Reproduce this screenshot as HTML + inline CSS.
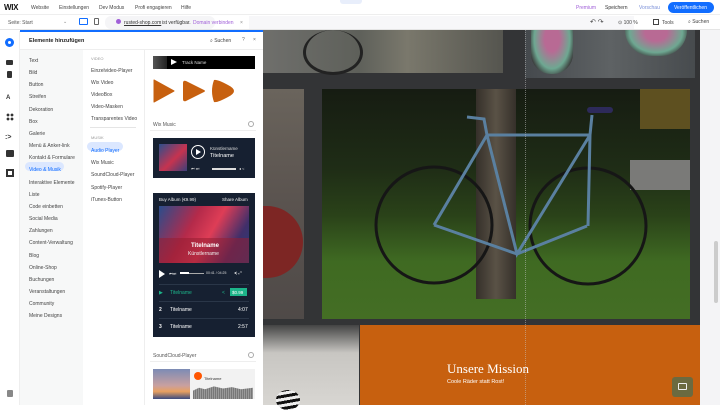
<!DOCTYPE html>
<html><head><meta charset="utf-8"><style>
*{margin:0;padding:0;box-sizing:border-box}
body{width:720px;height:405px;overflow:hidden;font-family:"Liberation Sans",sans-serif;background:#fff;position:relative;font-size:5px;color:#333}
.a{position:absolute}
.t{position:absolute;white-space:nowrap}
</style></head><body>
<!-- top bar -->
<div class="a" style="left:0;top:0;width:720px;height:15px;background:#fff;border-bottom:1px solid #eee"></div>
<div class="t" style="left:4px;top:3px;font-size:8px;font-weight:bold;color:#111;letter-spacing:-0.3px">WIX</div>
<div class="t" style="left:31px;top:5px;color:#444">Website</div>
<div class="t" style="left:59px;top:5px;color:#444">Einstellungen</div>
<div class="t" style="left:99px;top:5px;color:#444">Dev Modus</div>
<div class="t" style="left:135px;top:5px;color:#444">Profi engagieren</div>
<div class="t" style="left:181px;top:5px;color:#444">Hilfe</div>
<div class="a" style="left:340px;top:0;width:22px;height:4px;background:#e8eefb;border-radius:0 0 3px 3px"></div>
<div class="t" style="left:576px;top:5px;color:#a05fd8">Premium</div>
<div class="t" style="left:605px;top:5px;color:#333">Speichern</div>
<div class="t" style="left:639px;top:5px;color:#7a8fd8">Vorschau</div>
<div class="a" style="left:668px;top:2px;width:46px;height:11px;background:#116dff;border-radius:6px"></div>
<div class="t" style="left:674px;top:5px;color:#fff">Veröffentlichen</div>
<!-- second row -->
<div class="a" style="left:0;top:15px;width:720px;height:15px;background:#fff;border-bottom:1px solid #e5e5e5"></div>
<div class="t" style="left:8px;top:20px;color:#555">Seite: Start</div>
<div class="t" style="left:63px;top:19px;color:#888">⌄</div>
<div class="a" style="left:79px;top:18px;width:9px;height:7px;border:1px solid #116dff;border-radius:1px"></div>
<div class="a" style="left:94px;top:18px;width:5px;height:7px;border:1px solid #666;border-radius:1px"></div>
<div class="a" style="left:105px;top:16px;width:110px;height:13px;background:#f5f5f7;border-radius:6px"></div>
<div class="a" style="left:249px;top:16px;width:385px;height:13px;background:#f7f7f9"></div>
<div class="a" style="left:116px;top:19px;width:5px;height:5px;border-radius:50%;background:#a05fd8"></div>
<div class="t" style="left:124px;top:20px;color:#333;text-decoration:underline">rusted-shop.com</div>
<div class="t" style="left:162px;top:20px;color:#333">ist verfügbar.</div>
<div class="t" style="left:193px;top:20px;color:#a05fd8">Domain verbinden</div>
<div class="t" style="left:240px;top:20px;color:#888">×</div>
<div class="t" style="left:590px;top:18px;font-size:7px;color:#444">↶ ↷</div>
<div class="t" style="left:618px;top:20px;color:#444">⊙ 100 %</div>
<div class="a" style="left:653px;top:19px;width:6px;height:6px;border:1px solid #444"></div>
<div class="t" style="left:662px;top:20px;color:#444">Tools</div>
<div class="t" style="left:688px;top:19px;color:#444">⌕ Suchen</div>
<!-- left rail -->
<div class="a" style="left:0;top:31px;width:20px;height:374px;background:#fff;border-right:1px solid #eee"></div>
<div class="a" style="left:5px;top:38px;width:9px;height:9px;border-radius:50%;background:#116dff"></div>
<div class="a" style="left:8px;top:41px;width:3px;height:3px;border-radius:50%;background:#fff"></div>
<div class="a" style="left:6px;top:60px;width:7px;height:5px;background:#333;border-radius:1px"></div>
<div class="a" style="left:7px;top:71px;width:5px;height:7px;background:#333;border-radius:1px"></div>
<div class="t" style="left:6px;top:95px;font-size:6px;font-weight:bold;color:#333">A</div>
<div class="a" style="left:6px;top:113px;width:8px;height:8px;background:radial-gradient(circle,#333 1.3px,transparent 1.5px) 0 0/4px 4px"></div>
<div class="t" style="left:5px;top:134px;font-size:7px;font-weight:bold;color:#333">:&gt;</div>
<div class="a" style="left:6px;top:150px;width:8px;height:7px;background:#333;border-radius:1px"></div>
<div class="a" style="left:6px;top:169px;width:8px;height:8px;border:2px solid #333"></div>
<div class="a" style="left:7px;top:390px;width:6px;height:7px;background:#888;border-radius:1px"></div>
<!-- panel -->
<div class="a" style="left:20px;top:30px;width:243px;height:2px;background:#116dff"></div>
<div class="a" style="left:20px;top:32px;width:243px;height:18px;background:#fff;border-bottom:1px solid #eee"></div>
<div class="t" style="left:29px;top:38px;font-size:5.5px;font-weight:bold;color:#222">Elemente hinzufügen</div>
<div class="t" style="left:210px;top:38px;color:#444">⌕ Suchen</div>
<div class="t" style="left:242px;top:37px;color:#666">?</div>
<div class="t" style="left:253px;top:37px;color:#666">×</div>
<div class="a" style="left:20px;top:50px;width:63px;height:355px;background:#f7f8f8"></div>
<div class="a" style="left:83px;top:50px;width:62px;height:355px;background:#fff;border-right:1px solid #eee"></div>
<div class="a" style="left:145px;top:50px;width:113px;height:355px;background:#fff"></div>
<div class="a" style="left:258px;top:50px;width:5px;height:355px;background:#fff"></div>
<div class="a" style="left:25px;top:162px;width:39px;height:9px;background:#dbe7ff;border-radius:5px"></div>
<div class="t" style="left:29px;top:55px;line-height:12.15px;color:#444">Text<br>Bild<br>Button<br>Streifen<br>Dekoration<br>Box<br>Galerie<br>Menü &amp; Anker-link<br>Kontakt &amp; Formulare<br><span style="color:#116dff">Video &amp; Musik</span><br>Interaktive Elemente<br>Liste<br>Code einbetten<br>Social Media<br>Zahlungen<br>Content-Verwaltung<br>Blog<br>Online-Shop<br>Buchungen<br>Veranstaltungen<br>Community<br>Meine Designs</div>
<div class="t" style="left:91px;top:56px;font-size:4px;color:#999">VIDEO</div>
<div class="t" style="left:91px;top:65px;line-height:12px;color:#444">Einzelvideo-Player<br>Wix Video<br>VideoBox<br>Video-Masken<br>Transparentes Video</div>
<div class="a" style="left:90px;top:127px;width:46px;height:1px;background:#e5e5e5"></div>
<div class="t" style="left:91px;top:135px;font-size:4px;color:#999">MUSIK</div>
<div class="a" style="left:87px;top:142px;width:36px;height:9px;background:#dbe7ff;border-radius:5px"></div>
<div class="t" style="left:91px;top:145px;line-height:12.2px;color:#444"><span style="color:#116dff">Audio Player</span><br>Wix Music<br>SoundCloud-Player<br>Spotify-Player<br>iTunes-Button</div>
<!-- previews -->
<div class="a" style="left:153px;top:56px;width:102px;height:13px;background:#000"></div>
<div class="a" style="left:153px;top:56px;width:14px;height:13px;background:linear-gradient(90deg,#555,#222)"></div>
<div class="a" style="left:171px;top:59px;width:0;height:0;border-left:6px solid #fff;border-top:3.5px solid transparent;border-bottom:3.5px solid transparent"></div>
<div class="t" style="left:182px;top:60px;font-size:4.5px;color:#ddd">Track Name</div>
<svg class="a" style="left:152px;top:78px" width="90" height="26"><path d="M2 2 L22 13 L2 24Z" fill="#c7600f" stroke="#c7600f" stroke-width="1" stroke-linejoin="round"/><path d="M34 3 L52 12 Q54 13 52 14 L34 23 Q31 24 31 21 L31 5 Q31 2 34 3Z" fill="#c7600f"/><path d="M62 2 Q65 1 76 7 Q88 13 76 19 Q65 25 62 24 Q58 13 62 2Z" fill="#c7600f"/></svg>
<div class="t" style="left:153px;top:122px;color:#555">Wix Music</div>
<div class="a" style="left:248px;top:121px;width:6px;height:6px;border:1px solid #aaa;border-radius:50%"></div>
<div class="a" style="left:150px;top:130px;width:106px;height:1px;background:#eee"></div>
<div class="a" style="left:153px;top:138px;width:102px;height:40px;background:#162031"></div>
<div class="a" style="left:159px;top:144px;width:28px;height:27px;background:linear-gradient(135deg,#2c4f8c,#c6334f 55%,#3a3f7a)"></div>
<div class="a" style="left:191px;top:145px;width:14px;height:14px;border:1px solid #fff;border-radius:50%"></div>
<div class="a" style="left:196px;top:149px;width:0;height:0;border-left:5px solid #fff;border-top:3px solid transparent;border-bottom:3px solid transparent"></div>
<div class="t" style="left:210px;top:146px;font-size:4.5px;color:#ddd">Künstlername</div>
<div class="t" style="left:210px;top:153px;font-size:5.5px;color:#fff">Titelname</div>
<div class="t" style="left:191px;top:166px;font-size:4px;color:#ddd">⏮ ⏭</div>
<div class="a" style="left:212px;top:168px;width:24px;height:2px;background:#ddd"></div>
<div class="t" style="left:239px;top:166px;font-size:4px;color:#ddd">◂ &lt;</div>
<div class="a" style="left:153px;top:193px;width:102px;height:144px;background:#162031"></div>
<div class="t" style="left:159px;top:197px;font-size:4.5px;color:#eee">Buy Album (€9.99)</div>
<div class="t" style="left:222px;top:197px;font-size:4.5px;color:#eee">Share Album</div>
<div class="a" style="left:159px;top:206px;width:90px;height:57px;background:linear-gradient(120deg,#2a4d8c 0%,#b42a4a 35%,#de3d56 55%,#402f6a 80%,#243d78)"></div>
<div class="a" style="left:159px;top:238px;width:90px;height:25px;background:rgba(150,30,50,.55)"></div>
<div class="t" style="left:191px;top:243px;font-size:6px;font-weight:bold;color:#fff">Titelname</div>
<div class="t" style="left:188px;top:251px;font-size:5px;color:#eee">Künstlername</div>
<div class="a" style="left:159px;top:270px;width:0;height:0;border-left:6px solid #fff;border-top:4px solid transparent;border-bottom:4px solid transparent"></div>
<div class="t" style="left:169px;top:271px;font-size:4px;color:#eee">⏮⏭</div>
<div class="a" style="left:180px;top:273px;width:24px;height:1px;background:#aaa"></div>
<div class="a" style="left:180px;top:272px;width:9px;height:2px;background:#fff"></div>
<div class="t" style="left:206px;top:271px;font-size:3.5px;color:#ddd">00:41 / 04:25</div>
<div class="t" style="left:234px;top:270px;font-size:4px;color:#eee">◂) ⤢</div>
<div class="a" style="left:159px;top:284px;width:90px;height:1px;background:#2a3648"></div>
<div class="t" style="left:159px;top:290px;font-size:5px;color:#1db58a">▶</div>
<div class="t" style="left:170px;top:290px;font-size:5px;color:#1db58a">Titelname</div>
<div class="t" style="left:222px;top:290px;font-size:5px;color:#1db58a">&lt;</div>
<div class="a" style="left:230px;top:288px;width:17px;height:8px;background:#1db58a"></div>
<div class="t" style="left:232px;top:290px;font-size:4.5px;color:#fff">$0.99</div>
<div class="a" style="left:159px;top:301px;width:90px;height:1px;background:#2a3648"></div>
<div class="t" style="left:159px;top:307px;font-size:5px;color:#fff;font-weight:bold">2</div>
<div class="t" style="left:170px;top:307px;font-size:5px;color:#fff">Titelname</div>
<div class="t" style="left:238px;top:307px;font-size:5px;color:#fff">4:07</div>
<div class="a" style="left:159px;top:318px;width:90px;height:1px;background:#2a3648"></div>
<div class="t" style="left:159px;top:324px;font-size:5px;color:#fff;font-weight:bold">3</div>
<div class="t" style="left:170px;top:324px;font-size:5px;color:#fff">Titelname</div>
<div class="t" style="left:238px;top:324px;font-size:5px;color:#fff">2:57</div>
<div class="t" style="left:153px;top:353px;color:#555">SoundCloud-Player</div>
<div class="a" style="left:248px;top:352px;width:6px;height:6px;border:1px solid #aaa;border-radius:50%"></div>
<div class="a" style="left:150px;top:361px;width:106px;height:1px;background:#eee"></div>
<div class="a" style="left:153px;top:369px;width:37px;height:30px;background:linear-gradient(180deg,#7c8bb5,#c8a0a0 55%,#e8a060 75%,#3a4a80)"></div>
<div class="a" style="left:190px;top:369px;width:65px;height:30px;background:#f2f2f2"></div>
<div class="a" style="left:194px;top:372px;width:8px;height:8px;border-radius:50%;background:#ff5500"></div>
<div class="t" style="left:204px;top:376px;font-size:4px;color:#333">Titelname</div>
<div class="a" style="left:193px;top:385px;width:60px;height:14px;background:repeating-linear-gradient(90deg,#777 0 1px,#999 1px 2px);clip-path:polygon(0 40%,10% 20%,20% 30%,35% 10%,50% 25%,65% 15%,80% 30%,100% 20%,100% 100%,0 100%)"></div>
<!-- canvas -->
<div class="a" style="left:263px;top:30px;width:437px;height:375px;background:#333436"></div>
<div class="a" style="left:263px;top:30px;width:240px;height:43px;background:linear-gradient(90deg,#6f6f6c,#5e605a 40%,#7a786c 60%,#55554f)"></div>
<div class="a" style="left:303px;top:30px;width:60px;height:45px;border:3px solid #222;border-radius:50%;border-top:none"></div>
<div class="a" style="left:525px;top:30px;width:170px;height:48px;background:linear-gradient(90deg,#45494d,#5e6264 50%,#474b4e)"></div>
<div class="a" style="left:531px;top:30px;width:42px;height:44px;border-radius:0 0 20px 20px;background:radial-gradient(ellipse at 50% 20%,#b86a94 25%,#6ea892 60%,#3a3a3a 80%)"></div>
<div class="a" style="left:625px;top:30px;width:62px;height:26px;border-radius:0 0 30px 30px;background:radial-gradient(ellipse at 50% 10%,#b86a94 25%,#6ea892 60%,#3a3a3a 80%)"></div>
<div class="a" style="left:263px;top:89px;width:41px;height:230px;background:linear-gradient(180deg,#6a645c,#5a534f 50%,#4f4a48)"></div>
<div class="a" style="left:263px;top:206px;width:40px;height:72px;border-radius:0 40px 40px 0;background:#7d2624"></div>
<div class="a" style="left:322px;top:89px;width:368px;height:230px;background:linear-gradient(180deg,#161c12 0%,#1f2d16 35%,#2a4219 55%,#3f6a22 75%,#446e24 100%)"></div>
<div class="a" style="left:640px;top:89px;width:50px;height:40px;background:#5e5020"></div>
<div class="a" style="left:630px;top:160px;width:60px;height:30px;background:#7a7a78"></div>
<div class="a" style="left:476px;top:89px;width:40px;height:210px;background:linear-gradient(90deg,#35302a,#5a5246,#35302a)"></div>
<svg class="a" style="left:322px;top:89px" width="368" height="230"><g fill="none" stroke="#161616" stroke-width="3"><circle cx="112" cy="136" r="58"/><circle cx="266" cy="137" r="58"/></g><g fill="none" stroke="#5a80a0" stroke-width="3"><path d="M112 136 L165 46 L268 46 L266 137 M165 46 L195 165 L268 46 M195 165 L112 136 M265 137 L195 165"/><path d="M268 46 L270 26 M165 46 L162 30 L145 28"/></g><rect x="265" y="18" width="26" height="6" rx="3" fill="#2d2a5a"/></svg>
<div class="a" style="left:263px;top:325px;width:96px;height:80px;background:linear-gradient(180deg,#444,#c8c6c2 35%,#d8d6d2)"></div>
<div class="a" style="left:276px;top:390px;width:24px;height:20px;border-radius:50%;background:repeating-linear-gradient(170deg,#111 0 3px,#eee 3px 6px)"></div>
<div class="a" style="left:360px;top:325px;width:340px;height:80px;background:#c7600f"></div>
<div class="t" style="left:447px;top:361px;font-family:'Liberation Serif',serif;font-size:13px;color:#fff">Unsere Mission</div>
<div class="t" style="left:447px;top:379px;font-size:5.5px;color:#fff">Coole Räder statt Rost!</div>
<div class="a" style="left:525px;top:30px;width:0;height:375px;border-left:1px dotted rgba(200,200,200,.5)"></div>
<div class="a" style="left:672px;top:377px;width:21px;height:20px;background:#6b6a40;border-radius:3px"></div>
<div class="a" style="left:678px;top:383px;width:9px;height:7px;border:1px solid #eee;border-radius:1px"></div>
<!-- scrollbar -->
<div class="a" style="left:700px;top:30px;width:20px;height:375px;background:#f4f4f6"></div>
<div class="a" style="left:714px;top:241px;width:4px;height:62px;background:#ccc;border-radius:2px"></div>
</body></html>
